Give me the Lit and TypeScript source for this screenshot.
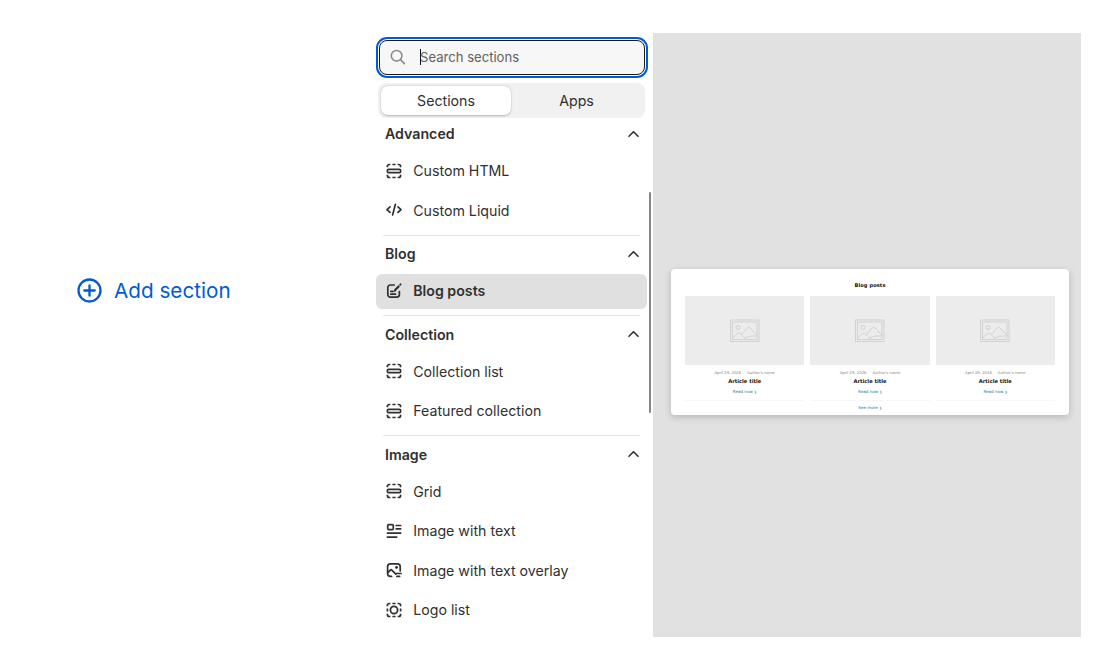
import { LitElement, html, css, svg } from "lit";
import { customElement, property } from "lit/decorators.js";

const sectionFrame = svg`<path stroke-linecap="butt" d="M1.4 4.2v-.7a2 2 0 0 1 2-2h1M11.600 1.500h1a2 2 0 0 1 2 2v.7M1.400 11.800v.7a2 2 0 0 0 2 2h1M11.600 14.500h1a2 2 0 0 0 2-2v-.7M6.400 1.500h3.200M6.400 14.500h3.200"/>`;

const icons: Record<string, unknown> = {
  section: svg`${sectionFrame}<rect x="1.4" y="6.300" width="13.200" height="3.400" rx="1.200"/>`,
  code: svg`<path d="M4 4.800 1 7.600l3 2.800M12 4.800l3 2.800-3 2.800M9.400 2.300 6.600 13"/>`,
  blog: svg`<path d="M8.2 2H4.400a2.600 2.600 0 0 0-2.600 2.600v7a2.600 2.600 0 0 0 2.600 2.600h6.400a2.600 2.600 0 0 0 2.600-2.600V8.600M4.900 8.400h2M4.900 11.200h4.600"/><path d="m9.200 6.900 3.400-3.500" stroke-width="2.200"/><path d="m14.300 1.600.2-.2" stroke-width="2"/><path d="m8 8.500.8-1.600.8.8z" stroke-width=".7"/>`,
  imageText: svg`<rect x="1.700" y="1.700" width="5.600" height="5" rx="1.100"/><path d="M10.200 2.500h4.500M10.200 5.800h4.500M1.400 10.100h13.300M1.400 14.100h9.300"/>`,
  overlay: svg`<path d="M5.600 14.400H4.400a2.800 2.800 0 0 1-2.800-2.800V4.600a2.800 2.800 0 0 1 2.800-2.800h7a2.800 2.800 0 0 1 2.800 2.800v4.400M1.800 10.600l2.600-2.500a1 1 0 0 1 1.400 0l4 4M10 11.500h5.200M10.900 14.400h2.700"/><circle cx="10.500" cy="5.400" r="1.100" fill="currentColor" stroke-width=".8"/>`,
  logo: svg`${sectionFrame}<path stroke-linecap="butt" d="M1.400 6.400v3.200M14.600 6.400v3.200"/><circle cx="8" cy="8" r="3.600" stroke-width="1.800"/>`,
};

interface Group {
  title: string;
  items: { icon: string; label: string; active?: boolean }[];
}

const groups: Group[] = [
  { title: "Advanced", items: [{ icon: "section", label: "Custom HTML" }, { icon: "code", label: "Custom Liquid" }] },
  { title: "Blog", items: [{ icon: "blog", label: "Blog posts", active: true }] },
  { title: "Collection", items: [{ icon: "section", label: "Collection list" }, { icon: "section", label: "Featured collection" }] },
  {
    title: "Image",
    items: [
      { icon: "section", label: "Grid" },
      { icon: "imageText", label: "Image with text" },
      { icon: "overlay", label: "Image with text overlay" },
      { icon: "logo", label: "Logo list" },
    ],
  },
];

@customElement("section-group")
class SectionGroup extends LitElement {
  @property({ attribute: false }) group!: Group;
  static styles = css`
    :host { display: block; }
    .head { display: flex; align-items: center; justify-content: space-between; height: 36.5px; padding: 0 8px 0 9px; font-weight: 600; }
    .head svg { width: 11px; height: 8px; stroke-width: 1.6; }
    .items { display: flex; flex-direction: column; gap: 4.4px; padding: 1.8px 0 6.3px; }
    .item { display: flex; align-items: center; gap: 11.2px; box-sizing: border-box; height: 35px; padding: 0 0 1px 10px; border-radius: 6px; }
    .item svg { width: 16px; height: 16px; stroke-width: 1.7; flex: none; }
    .item.active { background: #e0e0e0; font-weight: 600; }
    svg { fill: none; stroke: currentColor; stroke-linecap: round; stroke-linejoin: round; }
  `;
  render() {
    return html`
      <div class="head">${this.group.title}<svg viewBox="0 0 11 8"><path d="m1 6.3 4.5-4.6L10 6.3" /></svg></div>
      <div class="items">
        ${this.group.items.map(
          (i) => html`<div class="item ${i.active ? "active" : ""}"><svg viewBox="0 0 16 16">${icons[i.icon]}</svg><span>${i.label}</span></div>`
        )}
      </div>
    `;
  }
}

@customElement("blog-preview")
class BlogPreview extends LitElement {
  static styles = css`
    :host { display: block; box-sizing: border-box; width: 398px; height: 146px; padding: 13px 14px 0; border-radius: 4px; background: #fff; box-shadow: 0 2px 7px rgba(0, 0, 0, 0.2); font-family: "DejaVu Sans", sans-serif; text-align: center; color: #111; }
    .title { font-size: 5.1px; font-weight: 700; letter-spacing: 0.08px; line-height: 7px; height: 14px; }
    .cards { display: grid; grid-template-columns: repeat(3, 1fr); gap: 6px; }
    .card { height: 104px; border-bottom: 1px solid #f7f7f7; }
    .pic { display: flex; align-items: center; justify-content: center; height: 69px; background: #ececec; }
    .pic svg { width: 30px; height: 24px; fill: none; stroke: #c8c8c8; stroke-width: 0.75; }
    .meta { display: flex; justify-content: center; gap: 6px; font-size: 3.8px; line-height: 6px; padding-top: 5px; color: #858585; }
    .name { font-size: 5.2px; font-weight: 700; line-height: 7px; padding-top: 2px; }
    .link { font-size: 4.1px; line-height: 6px; color: #16808f; }
    .link span { font-size: 3px; }
    .card .link { padding-top: 4px; }
    .more { padding-top: 4px; }
  `;
  render() {
    return html`
      <div class="title">Blog posts</div>
      <div class="cards">
        ${[0, 1, 2].map(
          () => html`<div class="card">
            <div class="pic"><svg viewBox="0 0 30 24"><rect x=".5" y="1" width="28.500" height="21.500" /><rect x="2.500" y="3" width="24.500" height="17.500" /><circle cx="8" cy="8.500" r="2" /><path d="M2.500 19 8 14.300q1-.8 2 0l5 5M11.500 15.300l6-6.500q1.200-1 2.400 0l7 7.200M14 19.300q5-3 13-2.500" /></svg></div>
            <div class="meta"><span>April 29, 2026</span><span>Author's name</span></div>
            <div class="name">Article title</div>
            <div class="link">Read now <span>❯</span></div>
          </div>`
        )}
      </div>
      <div class="link more">See more <span>❯</span></div>
    `;
  }
}

@customElement("app-root")
class AppRoot extends LitElement {
  static styles = css`
    :host { display: flex; box-sizing: border-box; width: 1116px; height: 669px; overflow: hidden; background: #fff; color: #303030; font-family: Inter, sans-serif; font-size: 14.2px; }
    .left { display: flex; align-items: center; box-sizing: border-box; width: 376px; height: 581px; padding-left: 77px; gap: 12px; color: #005bd3; font-size: 20.7px; }
    .left svg { width: 25px; height: 25px; }
    svg { fill: none; stroke: currentColor; stroke-linecap: round; stroke-linejoin: round; }
    .panel { width: 271px; padding-top: 37px; margin-right: 2px; }
    .search { display: flex; align-items: center; box-sizing: border-box; width: 266px; height: 35px; margin: 3px 0 0 3px; padding: 0 0 1px 10px; border: 1px solid #1a1a1a; border-radius: 8px; background: #f7f7f7; color: #616161; font-size: 13.1px; outline: 2px solid #005bd3; outline-offset: 1px; }
    .search svg { width: 16px; height: 16px; stroke: #8a8a8a; stroke-width: 1.6; }
    .caret { width: 1px; height: 16px; margin: 0 -1px 0 14px; background: #111; }
    .tabs { display: grid; grid-template-columns: 130px 1fr; box-sizing: border-box; width: 267px; height: 35px; margin: 8px 0 0 2px; padding: 3px; border-radius: 8px; background: #f1f1f1; }
    .tab { display: flex; align-items: center; justify-content: center; }
    .tab.on { border-radius: 7px; background: #fff; box-shadow: 0 0.5px 2px rgba(0, 0, 0, 0.25); }
    .line { height: 1px; margin: 0 7px; background: #e6e6e6; }
    .list { display: block; margin-top: -2.4px; }
    .bar { width: 2px; height: 221px; margin-top: 192px; border-radius: 1px; background: #868686; }
    .stage { display: flex; align-items: flex-start; justify-content: center; box-sizing: border-box; width: 428px; height: 604px; margin: 33px 0 0 2px; padding: 236px 0 0 6px; background: #e1e1e1; }
  `;
  render() {
    return html`
      <div class="left">
        <svg viewBox="0 0 25 25" stroke-width="2.3"><circle cx="12.5" cy="12.5" r="11" /><path d="M12.500 7.300v10.400M7.300 12.500h10.400" /></svg>
        <span>Add section</span>
      </div>
      <div class="panel">
        <div class="search"><svg viewBox="0 0 16 16"><circle cx="6.600" cy="6.800" r="5.300" /><path d="m10.700 10.900 3.700 3.700" /></svg><i class="caret"></i><span>Search sections</span></div>
        <div class="tabs"><div class="tab on">Sections</div><div class="tab">Apps</div></div>
        <div class="list">
          ${groups.map((g, n) => html`${n ? html`<div class="line"></div>` : ""}<section-group .group=${g}></section-group>`)}
        </div>
      </div>
      <div class="bar"></div>
      <div class="stage"><blog-preview></blog-preview></div>
    `;
  }
}
